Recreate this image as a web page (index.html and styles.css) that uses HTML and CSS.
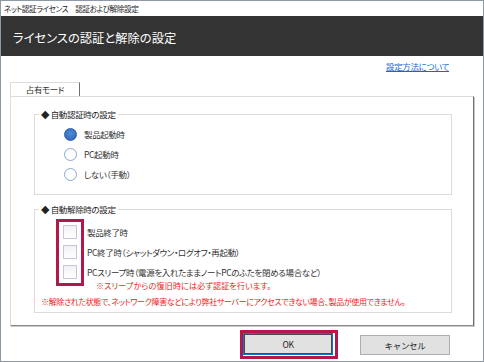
FILE: index.html
```html
<!DOCTYPE html>
<html lang="ja">

<head>
  <meta charset="UTF-8">
  <meta name="viewport" content="width=device-width, initial-scale=1.0">

  <title>認証および解除設定</title>
  <link rel="stylesheet" href="styles.css">
</head>

<body>
  <div class="window">
    <div class="titlebar">ネット認証ライセンス　認証および解除設定</div>
    <div class="header">ライセンスの認証と解除の設定</div>

    <div class="content">
      <div class="link-row">
        <a href="#" class="help-link">設定方法について</a>
      </div>

      <div class="tabs">
        <span class="tab">占有モード</span>
      </div>

      <div class="tab-panel">
        <fieldset class="group group-auth">
          <legend>◆ 自動認証時の設定</legend>
          <div class="radio-list">
            <label class="option"><span class="radio checked"></span>製品起動時</label>
            <label class="option"><span class="radio"></span>PC起動時</label>
            <label class="option"><span class="radio"></span>しない（手動）</label>
          </div>
        </fieldset>

        <fieldset class="group group-release">
          <legend>◆ 自動解除時の設定</legend>
          <div class="check-list">
            <div class="highlight"></div>
            <label class="option"><span class="checkbox"></span>製品終了時</label>
            <label class="option"><span class="checkbox"></span>PC終了時（シャットダウン・ログオフ・再起動）</label>
            <label class="option"><span class="checkbox"></span>PCスリープ時（電源を入れたままノートPCのふたを閉める場合など）</label>
          </div>
          <p class="note note-sleep">※スリープからの復旧時には必ず認証を行います。</p>
          <p class="note">※解除された状態で、ネットワーク障害などにより弊社サーバーにアクセスできない場合、製品が使用できません。</p>
        </fieldset>
      </div>

      <div class="buttons">
        <div class="focus-frame">
          <button type="button" class="btn btn-ok">OK</button>
        </div>
        <button type="button" class="btn btn-cancel">キャンセル</button>
      </div>
    </div>
  </div>
</body>
</html>
```

FILE: styles.css
```css
/* Styles for the license dialog */

* {
  box-sizing: border-box;
}

body {
  margin: 0;
  background-color: #fff;
  color: #333;
  font-family: "Noto Sans CJK JP", "Noto Sans", sans-serif;
  font-feature-settings: "palt";
  font-size: 8.5px;
  letter-spacing: -0.35px;
}

.window {
  width: 484px;
  height: 362px;
  border: 1px solid #8d99a6;
  display: flex;
  flex-direction: column;
}

.titlebar {
  height: 15px;
  line-height: 15px;
  padding-left: 3px;
  font-size: 7.7px;
  letter-spacing: -0.5px;
  color: #222;
}

.header {
  height: 40px;
  padding: 14px 0 0 12px;
  line-height: 16px;
  background-color: #333;
  color: #fff;
  font-size: 12.3px;
  letter-spacing: 0;
}

.content {
  padding: 0 9px 0 9px;
}

.link-row {
  height: 26px;
  padding: 4px 25px 0 0;
  line-height: 12px;
  text-align: right;
}

.help-link {
  color: #1a66c9;
  text-decoration: underline;
}

.tabs {
  display: flex;
  height: 14px;
}

.tab {
  position: relative;
  z-index: 1;
  width: 70px;
  height: 14px;
  line-height: 13px;
  text-align: center;
  background-color: #fff;
  border: 1px solid #dcdcdc;
  border-right-color: #6f6f6f;
  border-bottom: none;
  margin-bottom: -1px;
}

.tab-panel {
  height: 230px;
  padding: 11px 21px 0 23px;
  border: 1px solid #dcdcdc;
  border-right: 1px solid #6f6f6f;
  border-bottom: 1px solid #8a8a8a;
  box-shadow: 1px 1px 0 #c8c8c8;
}

.group {
  margin: 0;
  padding: 0;
  border: 1px solid #dcdcdc;
}

.group legend {
  margin-left: 4px;
  padding: 0 2px;
  line-height: 12px;
  color: #222;
}

.group-auth {
  padding: 4px 0 10px 0;
}

.radio-list {
  padding-left: 29px;
}

.group-release {
  margin-top: 8px;
  padding: 7px 0 2px 0;
}

.option {
  display: flex;
  align-items: center;
  height: 20px;
  gap: 7px;
}

.radio {
  width: 13px;
  height: 13px;
  border-radius: 50%;
  border: 1px solid #86a8d8;
  background-color: #fff;
}

.radio.checked {
  border-color: #2b5ea6;
  background: radial-gradient(circle at 50% 40%, #4f8ad6, #2a64b5);
}

.check-list {
  position: relative;
  padding-left: 28px;
}

.check-list .option {
  gap: 10px;
}

.checkbox {
  width: 14px;
  height: 14px;
  border: 1px solid #c5c5dc;
  background: linear-gradient(#f2f2f6, #fff);
}

.highlight {
  position: absolute;
  left: 21px;
  top: -3px;
  width: 28px;
  height: 67px;
  border: 3px solid #b5174a;
}

.note {
  margin: 0;
  padding-left: 6px;
  line-height: 16px;
  font-size: 8px;
  letter-spacing: -0.35px;
  white-space: nowrap;
  color: #ee1c1c;
}

.note-sleep {
  margin-top: -4px;
  padding-left: 61px;
  letter-spacing: 0.2px;
}

.buttons {
  display: flex;
  align-items: center;
  justify-content: flex-end;
  gap: 22px;
  margin-top: 4px;
  padding-right: 24px;
}

.focus-frame {
  padding: 0 2px 1px 0;
  border: 3px solid #b5174a;
}

.btn {
  display: block;
  margin: 0;
  padding: 0;
  font-family: inherit;
  font-size: 8.5px;
  letter-spacing: -0.3px;
  color: #222;
  background-color: #e1e1e1;
  border: 1px solid #adadad;
  cursor: pointer;
}

.btn-ok {
  width: 90px;
  height: 22px;
  border-color: #0078d7;
  box-shadow: inset 0 0 0 1px #4a4a4a;
}

.btn-cancel {
  width: 90px;
  height: 20px;
}
```
